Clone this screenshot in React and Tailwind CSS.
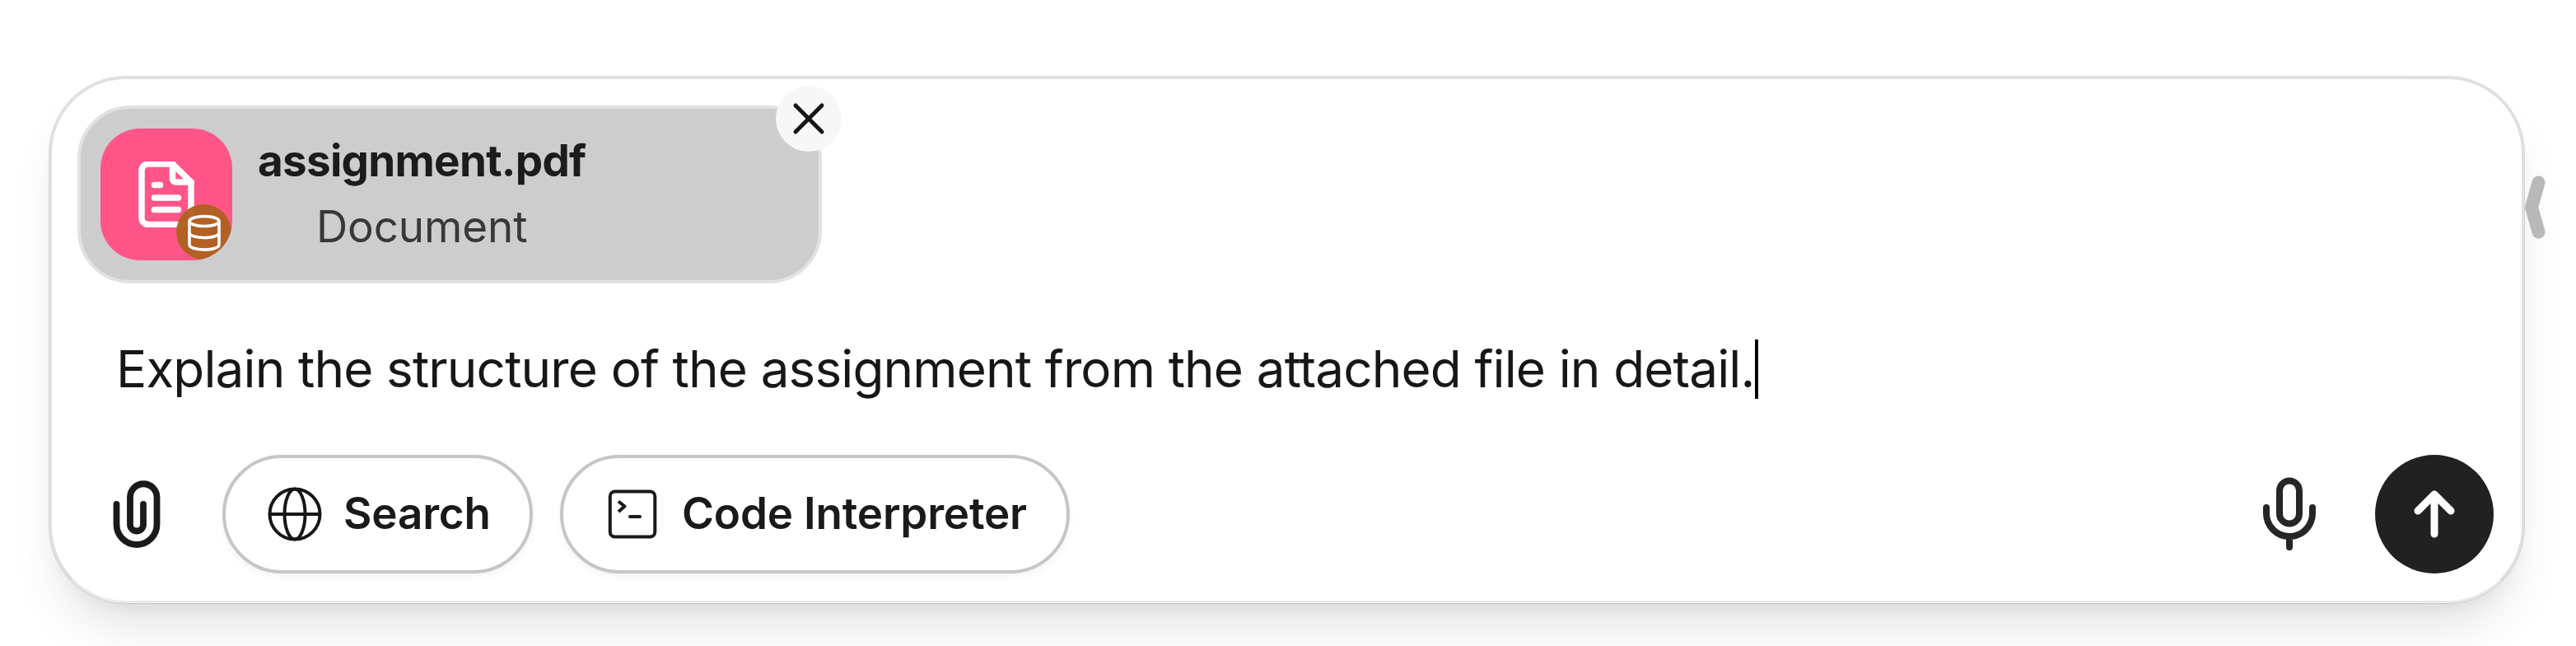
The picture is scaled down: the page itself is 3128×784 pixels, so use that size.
import { useState } from "react";

function FileIcon() {
  return (
    <svg className="h-20 w-20" viewBox="162 196 80 80" fill="none" stroke="white" strokeWidth="7.5" strokeLinecap="round" strokeLinejoin="round">
      <path d="M209.5 199H180a8 8 0 0 0-8 8v57.500a8 8 0 0 0 8 8h44a8 8 0 0 0 8-8V221z" />
      <path d="M209.500 199v18a4 4 0 0 0 4 4H232" />
      <path d="M187.500 224.500h7M187.500 240h29M187.500 254.500h29" />
    </svg>
  );
}

function DatabaseIcon() {
  return (
    <svg className="h-12 w-12" viewBox="224 257 48 48" fill="none" stroke="white" strokeWidth="3.6" strokeLinecap="round">
      <ellipse cx="248" cy="267.500" rx="18" ry="6" />
      <path d="M230 267.500V296c0 3.500 8 6 18 6s18-2.500 18-6v-28.500" />
      <path d="M230 281.500c0 3.500 8 6 18 6s18-2.500 18-6" />
    </svg>
  );
}

function CloseIcon() {
  return (
    <svg className="h-10 w-10" viewBox="0 0 40 40" fill="none" stroke="#171717" strokeWidth="5" strokeLinecap="round">
      <path d="M4 4l32 32M36 4L4 36" />
    </svg>
  );
}

function PaperclipIcon() {
  return (
    <svg className="h-24 w-24" viewBox="118 576 96 96" fill="none" stroke="#1a1a1a" strokeWidth="7.8" strokeLinecap="round">
      <path d="M141.500 612V636.500A24.500 24.500 0 0 0 190.500 636.500V603.500A16.250 16.250 0 0 0 158 603.500V636.500A8 8 0 0 0 174 636.500V612" />
    </svg>
  );
}

function GlobeIcon() {
  return (
    <svg className="h-[66px] w-[66px]" viewBox="0 0 66 66" fill="none" stroke="#171717" strokeWidth="4">
      <circle cx="33" cy="33" r="30.500" />
      <ellipse cx="33" cy="33" rx="12.500" ry="30.500" />
      <path d="M2.500 33h61" />
    </svg>
  );
}

function TerminalIcon() {
  return (
    <svg className="h-[60px] w-[60px]" viewBox="738 594 60 60" fill="none" stroke="#1a1a1a" strokeWidth="4" strokeLinejoin="round">
      <rect x="740.800" y="596.500" width="54.500" height="55" rx="6" />
      <path d="M751 608.500l7.500 6-7.500 6.500" />
      <path d="M765 627h12" strokeLinecap="round" />
    </svg>
  );
}

function MicIcon() {
  return (
    <svg className="h-24 w-24" viewBox="2732 576 96 96" fill="none" stroke="#262626" strokeWidth="8" strokeLinecap="round">
      <rect x="2768" y="583.500" width="24" height="52" rx="12" />
      <path d="M2752 616v7a28 28 0 0 0 56 0v-7M2780 652v12" />
    </svg>
  );
}

function ArrowUpIcon() {
  return (
    <svg className="h-20 w-20" viewBox="2916 584 80 80" fill="none" stroke="white" strokeWidth="9" strokeLinecap="round" strokeLinejoin="round">
      <path d="M2956 648v-48M2936 620l20-20 20 20" />
    </svg>
  );
}

function ToolButton({ icon, label, className }) {
  return (
    <button
      type="button"
      className={`flex h-36 items-center rounded-full border-4 border-[#c6c6c6] bg-white text-[53px] font-semibold tracking-[-0.2px] text-[#1a1a1a] shadow-[0_4px_8px_rgba(0,0,0,0.05)] ${className}`}
    >
      {icon}
      <span className="whitespace-nowrap">{label}</span>
    </button>
  );
}

function AttachedFile({ name, type, onRemove }) {
  return (
    <div className="relative flex h-[216px] w-[904px] items-center rounded-[64px] border-4 border-[#e2e2e2] bg-[#cdcdcd] pl-6">
      <div className="relative flex h-40 w-40 shrink-0 items-center justify-center overflow-hidden rounded-[48px] bg-[#ff5588]">
        <FileIcon />
        <div className="absolute right-px bottom-px flex h-[67px] w-[67px] items-center justify-center rounded-full bg-[#af6120]/97">
          <DatabaseIcon />
        </div>
      </div>
      <div className="mb-0.5 ml-[31px] flex flex-col items-center">
        <div className="text-[53px] leading-[80px] font-bold tracking-[-0.75px] text-[#1c1c1c]">{name}</div>
        <div className="text-[53px] leading-[80px] tracking-[-0.15px] text-[#383838]">{type}</div>
      </div>
      {/* Remove button overlaps the top right corner */}
      <button
        type="button"
        aria-label="Remove file"
        onClick={onRemove}
        className="absolute -top-7 -right-7 flex h-20 w-20 items-center justify-center rounded-full bg-[#f7f7f7]"
      >
        <CloseIcon />
      </button>
    </div>
  );
}

export default function App() {
  const [file, setFile] = useState({ name: "assignment.pdf", type: "Document" });

  return (
    <div className="relative h-[784px] w-[3128px] overflow-hidden bg-white pt-[92px] pl-[59px] font-['Inter',sans-serif]">
      <div className="flex h-[641px] w-[3007px] flex-col rounded-[94px] border-4 border-black/12 border-b-black/8 bg-white bg-clip-padding pt-8 pr-[34px] pb-[33px] pl-[31px] shadow-[0_40px_60px_-12px_rgba(0,0,0,0.1),0_16px_24px_-16px_rgba(0,0,0,0.1)]">
        {file && <AttachedFile name={file.name} type={file.type} onRemove={() => setFile(null)} />}

        {/* Message */}
        <div className="mt-[60px] flex items-center pl-[47px]">
          <p className="text-[62px] leading-[88px] tracking-[-0.87px] whitespace-nowrap text-[#171717]">
            Explain the structure of the assignment from the attached file in detail.
          </p>
          <span className="ml-px h-[72px] w-1 bg-black" />
        </div>

        {/* Toolbar */}
        <div className="mt-auto flex items-center">
          <button type="button" aria-label="Attach" className="ml-6">
            <PaperclipIcon />
          </button>
          <ToolButton icon={<GlobeIcon />} label="Search" className="ml-14 w-[377px] gap-[26px] pl-[51px]" />
          <ToolButton icon={<TerminalIcon />} label="Code Interpreter" className="ml-[33px] w-[619px] gap-[30px] pl-[54px]" />
          <button type="button" aria-label="Dictate" className="ml-auto">
            <MicIcon />
          </button>
          <button type="button" aria-label="Send" className="ml-14 flex h-36 w-36 items-center justify-center rounded-full bg-[#212121]">
            <ArrowUpIcon />
          </button>
        </div>
      </div>

      {/* Side panel handle */}
      <svg className="absolute top-[212px] left-[3064px] h-20 w-7" viewBox="0 0 28 80" fill="none" stroke="#b9b9b9" strokeWidth="16" strokeLinecap="round" strokeLinejoin="round">
        <path d="M18.500 9.500L10 39.500l8.500 30" />
      </svg>
    </div>
  );
}
